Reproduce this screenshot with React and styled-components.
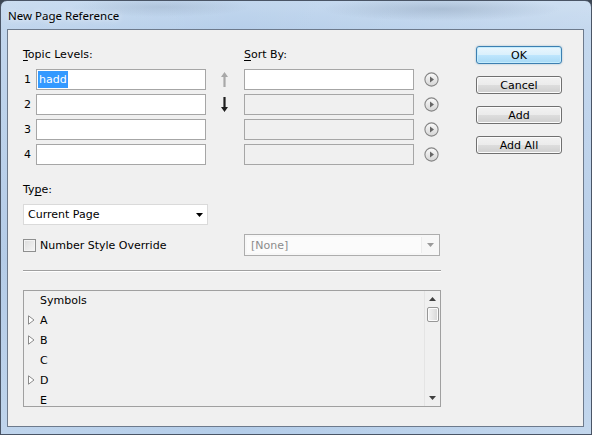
import React from 'react';
import styled, { createGlobalStyle, css } from 'styled-components';

const GlobalStyle = createGlobalStyle`
  html, body {
    margin: 0;
    padding: 0;
    background: #3d4754;
  }
  body {
    font-family: "DejaVu Sans", Verdana, sans-serif;
    font-size: 11px;
    color: #000;
  }
`;

const Window = styled.div`
  width: 592px;
  height: 435px;
  box-sizing: border-box;
  display: flex;
  flex-direction: column;
  border: 1px solid #4a5566;
  border-radius: 7px 7px 0 0;
  overflow: hidden;
  background:
    radial-gradient(ellipse 120px 12px at 440px 8px, rgba(120, 140, 165, 0.35), transparent),
    radial-gradient(ellipse 90px 10px at 160px 6px, rgba(120, 140, 165, 0.25), transparent),
    linear-gradient(90deg, rgba(255, 255, 255, 0.15), rgba(255, 255, 255, 0) 40%, rgba(255, 255, 255, 0.2)),
    linear-gradient(180deg, #c2d7ee 0%, #b7cfea 28px, #a8c3e3 60%, #b4cde9 100%);
`;

const TitleBar = styled.div`
  height: 28px;
  flex: none;
  display: flex;
  align-items: center;
  padding-left: 7px;
  font-family: "Noto Sans", "Open Sans", sans-serif;
  font-size: 11.5px;
  color: #000;
  text-shadow: 0 0 6px rgba(255, 255, 255, 0.9);
`;

const Body = styled.div`
  flex: 1;
  margin: 0 7px 7px 6px;
  border: 1px solid #6d7a8c;
  background: #f0f0f0;
  display: flex;
  padding: 16px 0 0 15px;
  box-sizing: border-box;
`;

const Main = styled.div`
  width: 418px;
  flex: none;
  padding-top: 2px;
  display: flex;
  flex-direction: column;
`;

const LevelGrid = styled.div`
  display: grid;
  grid-template-columns: 13px 170px 38px 170px 27px;
  grid-template-rows: 17px repeat(4, 21px);
  row-gap: 4px;
`;

const Label = styled.div`
  line-height: 14px;
  height: 14px;
  grid-column: ${(p) => p.$col || 'auto'};
  white-space: nowrap;
`;

const Key = styled.span`
  text-decoration: underline;
  text-underline-offset: 2px;
`;

const RowNum = styled.div`
  display: flex;
  align-items: center;
  padding-left: 1px;
`;

const TextBox = styled.div`
  box-sizing: border-box;
  height: 21px;
  border: 1px solid #a6a6a6;
  background: ${(p) => (p.$disabled ? '#f0f0f0' : '#fff')};
  display: flex;
  align-items: center;
  padding-left: 1px;
`;

const Selected = styled.span`
  background: #3399ff;
  color: #fff;
  line-height: 17px;
  padding: 0 1px;
`;

const ArrowCell = styled.div`
  display: flex;
  align-items: center;
  justify-content: center;
  padding-right: 2px;
`;

const CircleCell = styled.div`
  display: flex;
  align-items: center;
  padding-left: 10px;
`;

const TypeLabel = styled(Label)`
  margin-top: 18px;
`;

const Select = styled.div`
  box-sizing: border-box;
  margin-top: 7px;
  width: 185px;
  height: 21px;
  border: 1px solid #dadada;
  background: #fff;
  display: flex;
  align-items: center;
  justify-content: space-between;
  padding: 0 4px 0 4px;
`;

const OptionRow = styled.div`
  margin-top: 9px;
  height: 22px;
  display: grid;
  grid-template-columns: 221px 196px;
  align-items: center;
`;

const CheckLabel = styled.label`
  display: flex;
  align-items: center;
  gap: 4px;
  white-space: nowrap;
`;

const CheckBox = styled.span`
  box-sizing: border-box;
  width: 13px;
  height: 13px;
  border: 1px solid #8e8f8f;
  background: linear-gradient(135deg, #dcdcdc, #f6f6f6);
  box-shadow: inset 0 0 0 1px #f4f4f4;
`;

const DisabledSelect = styled.div`
  box-sizing: border-box;
  height: 22px;
  border: 1px solid #adadad;
  background: #f7f7f7;
  display: flex;
  align-items: stretch;
  color: #8b8b8b;
`;

const DisabledValue = styled.div`
  flex: 1;
  display: flex;
  align-items: center;
  padding-left: 4px;
  margin: 2px 0 2px 2px;
  background: #fbfbfb;
  border-right: 1px solid #ececec;
`;

const DisabledDrop = styled.div`
  width: 17px;
  display: flex;
  align-items: center;
  justify-content: center;
`;

const Separator = styled.div`
  margin-top: 14px;
  border-top: 1px solid #a0a0a0;
  border-bottom: 1px solid #fff;
`;

const ListBox = styled.div`
  margin-top: 18px;
  height: 117px;
  box-sizing: border-box;
  border: 1px solid #a0a0a0;
  display: flex;
  background: #f0f0f0;
`;

const ListItems = styled.div`
  flex: 1;
  margin-top: -1px;
`;

const ListRow = styled.div`
  height: 20px;
  display: flex;
  align-items: center;
  padding-left: 3px;
`;

const Twisty = styled.span`
  width: 12px;
  display: flex;
  align-items: center;
  margin-right: 0;
  padding-left: 1px;
`;

const ScrollBar = styled.div`
  width: 15px;
  border-left: 1px solid #e4e4e4;
  display: flex;
  flex-direction: column;
  align-items: center;
`;

const ScrollArrow = styled.div`
  height: 16px;
  display: flex;
  align-items: center;
  justify-content: center;
`;

const Thumb = styled.div`
  box-sizing: border-box;
  width: 12px;
  height: 15px;
  border: 1px solid #979797;
  border-radius: 2px;
  background: linear-gradient(90deg, #f3f3f3, #e6e6e6 50%, #d6d6d6);
  box-shadow: inset 0 0 0 1px #fbfbfb;
`;

const ScrollTrack = styled.div`
  flex: 1;
`;

const Buttons = styled.div`
  margin-left: 35px;
  width: 86px;
  flex: none;
  display: flex;
  flex-direction: column;
  gap: 12px;
`;

const Button = styled.button`
  box-sizing: border-box;
  height: 18px;
  width: 100%;
  padding: 0;
  font: inherit;
  color: #000;
  border: 1px solid #707070;
  border-radius: 3px;
  background: linear-gradient(180deg, #f2f2f2 0%, #ebebeb 50%, #dddddd 51%, #cfcfcf 100%);
  box-shadow: inset 0 0 0 1px #fbfbfb;
  ${(p) =>
    p.$default &&
    css`
      border-color: #3c7fb1;
      background: linear-gradient(180deg, #eaf6fd 0%, #d9f0fc 50%, #bee6fd 51%, #a7d9f5 100%);
      box-shadow: inset 0 0 0 1px #c4ecfd, 0 0 2px rgba(60, 127, 177, 0.5);
    `}
`;

const ArrowIcon = ({ down }) => (
  <svg width="7" height="15" viewBox="0 0 7 15" style={{ transform: down ? 'rotate(180deg)' : undefined }}>
    <path d="M3.5 0 L7 5 H4.6 V15 H2.4 V5 H0 Z" fill={down ? '#1e1e1e' : '#a8a8a8'} />
  </svg>
);

const RoundArrow = () => (
  <svg width="15" height="15" viewBox="0 0 15 15">
    <defs>
      <linearGradient id="rg" x1="0" y1="0" x2="0" y2="1">
        <stop offset="0" stopColor="#fbfbfb" />
        <stop offset="1" stopColor="#d4d4d4" />
      </linearGradient>
    </defs>
    <circle cx="7.5" cy="7.5" r="6.6" fill="url(#rg)" stroke="#858585" strokeWidth="1.1" />
    <path d="M6 4.5 L10 7.5 L6 10.5 Z" fill="#666" />
  </svg>
);

const Caret = ({ color = '#000' }) => (
  <svg width="7" height="4" viewBox="0 0 7 4">
    <path d="M0 0 H7 L3.5 4 Z" fill={color} />
  </svg>
);

const TwistyIcon = () => (
  <svg width="7" height="10" viewBox="0 0 7 10">
    <path d="M0.5 0.8 L6 5 L0.5 9.2 Z" fill="#fff" stroke="#8a8a8a" strokeWidth="1" />
  </svg>
);

const ScrollTri = ({ down }) => (
  <svg width="7" height="4" viewBox="0 0 7 4">
    <path d={down ? 'M0 0 H7 L3.5 4 Z' : 'M3.5 0 L7 4 H0 Z'} fill="#404040" />
  </svg>
);

const entries = [
  { label: 'Symbols', expandable: false },
  { label: 'A', expandable: true },
  { label: 'B', expandable: true },
  { label: 'C', expandable: false },
  { label: 'D', expandable: true },
  { label: 'E', expandable: false },
];

export default function App() {
  const rows = [1, 2, 3, 4];
  return (
    <>
      <GlobalStyle />
      <Window>
        <TitleBar>New Page Reference</TitleBar>
        <Body>
          <Main>
            <LevelGrid>
              <Label $col="1 / 4">
                <Key>T</Key>opic Levels:
              </Label>
              <Label $col="4 / 6">
                <Key>S</Key>ort By:
              </Label>
              {rows.map((n) => (
                <React.Fragment key={n}>
                  <RowNum>{n}</RowNum>
                  <TextBox>{n === 1 && <Selected>hadd</Selected>}</TextBox>
                  <ArrowCell>
                    {n === 1 && <ArrowIcon />}
                    {n === 2 && <ArrowIcon down />}
                  </ArrowCell>
                  <TextBox $disabled={n !== 1} />
                  <CircleCell>
                    <RoundArrow />
                  </CircleCell>
                </React.Fragment>
              ))}
            </LevelGrid>

            <TypeLabel>
              Ty<Key>p</Key>e:
            </TypeLabel>
            <Select>
              <span>Current Page</span>
              <Caret />
            </Select>

            <OptionRow>
              <CheckLabel>
                <CheckBox />
                Number Style Override
              </CheckLabel>
              <DisabledSelect>
                <DisabledValue>[None]</DisabledValue>
                <DisabledDrop>
                  <Caret color="#9a9a9a" />
                </DisabledDrop>
              </DisabledSelect>
            </OptionRow>

            <Separator />

            <ListBox>
              <ListItems>
                {entries.map((e) => (
                  <ListRow key={e.label}>
                    <Twisty>{e.expandable && <TwistyIcon />}</Twisty>
                    {e.label}
                  </ListRow>
                ))}
              </ListItems>
              <ScrollBar>
                <ScrollArrow>
                  <ScrollTri />
                </ScrollArrow>
                <Thumb />
                <ScrollTrack />
                <ScrollArrow>
                  <ScrollTri down />
                </ScrollArrow>
              </ScrollBar>
            </ListBox>
          </Main>

          <Buttons>
            <Button $default>OK</Button>
            <Button>Cancel</Button>
            <Button>Add</Button>
            <Button>Add All</Button>
          </Buttons>
        </Body>
      </Window>
    </>
  );
}
